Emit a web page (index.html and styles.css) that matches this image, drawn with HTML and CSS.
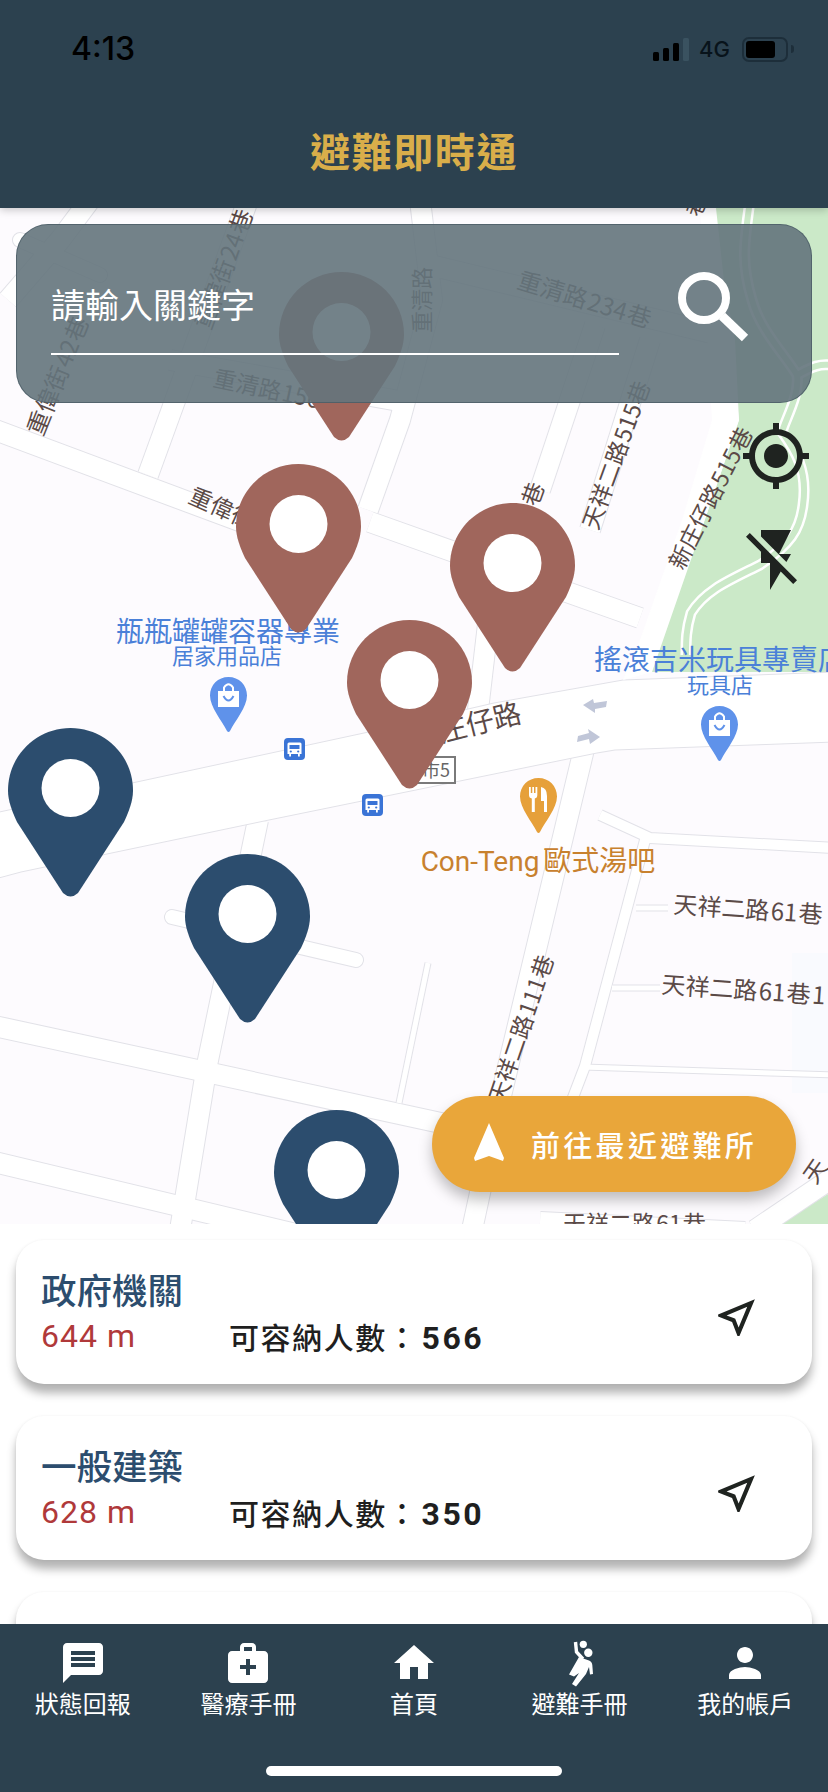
FILE: index.html
```html
<!DOCTYPE html>
<html lang="zh-Hant">
<head>
<meta charset="utf-8">
<title>避難即時通</title>
<link rel="stylesheet" href="styles.css">
</head>
<body>
<div class="app">
  <header class="topbar">
    <div class="status">
      <span class="time">4:13</span>
      <div class="status-right">
        <div class="signal"><i class="b1"></i><i class="b2"></i><i class="b3"></i><i class="b4"></i></div>
        <span class="net">4G</span>
        <div class="battery"><i class="level"></i></div>
        <i class="nub"></i>
      </div>
    </div>
    <h1 class="title">避難即時通</h1>
  </header>

  <main class="map">
    <svg class="basemap" viewBox="0 208 828 1016" width="828" height="1016" aria-hidden="true">
      <rect class="m-tint" x="792" y="953" width="36" height="140"/>
      <polygon class="m-green" points="715,208 828,208 828,672 644,672 652,650 681,567 703,525 739,420 735,340 720,260"/>
      <polygon class="m-green" points="780,1224 828,1194 828,1224"/>

      <g class="m-edge">
        <polyline points="-10,428 250,525"/>
        <polyline points="370,522 640,618"/>
        <polyline points="248,200 148,475"/>
        <polyline points="420,200 432,300 400,420 368,510"/>
        <polyline points="430,265 720,335"/>
        <polyline points="170,360 410,403"/>
        <polyline points="595,325 540,490"/>
        <polyline points="650,340 590,530"/>
        <polyline points="492,590 478,710"/>
        <polyline points="585,745 500,1100 472,1230"/>
        <polyline points="258,820 207,1065 180,1230"/>
        <polyline points="-10,1025 450,1125"/>
        <polyline points="-10,1161 300,1235"/>
        <polyline points="755,1230 835,1176"/>
        <polyline points="540,1222 745,1232"/>
        <polyline class="w-sm" points="172,917 356,960"/>
        <polyline class="w-xs" points="428,963 399,1103"/>
        <polyline class="w-t" points="645,840 585,1066 572,1100"/>
        <polyline class="w-t" points="600,815 650,838 835,848"/>
        <polyline class="w-xs" points="636,908 668,908"/>
        <polyline class="w-xs" points="612,988 660,988"/>
        <polyline class="w-xs" points="583,1067 835,1075"/>
        <polyline points="90,200 60,240 8,300"/>
        <polyline class="w-sm" points="20,240 100,275"/>
      </g>
      <g class="m-road">
        <polyline points="-10,428 250,525"/>
        <polyline points="370,522 640,618"/>
        <polyline points="248,200 148,475"/>
        <polyline points="420,200 432,300 400,420 368,510"/>
        <polyline points="430,265 720,335"/>
        <polyline points="170,360 410,403"/>
        <polyline points="595,325 540,490"/>
        <polyline points="650,340 590,530"/>
        <polyline points="492,590 478,710"/>
        <polyline points="585,745 500,1100 472,1230"/>
        <polyline points="258,820 207,1065 180,1230"/>
        <polyline points="-10,1025 450,1125"/>
        <polyline points="-10,1161 300,1235"/>
        <polyline points="755,1230 835,1176"/>
        <polyline points="540,1222 745,1232"/>
        <polyline class="w-sm" points="172,917 356,960"/>
        <polyline class="w-xs" points="428,963 399,1103"/>
        <polyline class="w-t" points="645,840 585,1066 572,1100"/>
        <polyline class="w-t" points="600,815 650,838 835,848"/>
        <polyline class="w-xs" points="636,908 668,908"/>
        <polyline class="w-xs" points="612,988 660,988"/>
        <polyline class="w-xs" points="583,1067 835,1075"/>
        <polyline points="90,200 60,240 8,300"/>
        <polyline class="w-sm" points="20,240 100,275"/>
      </g>

      <polygon class="m-main" points="-5,813 132,783 364,733 494,703 623,680 835,672 835,742 615,750 597,753 269,820 21,872 -5,879"/>
      <polygon class="m-white" points="700,208 716,208 739,420 703,525 652,672 623,680 640,640 682,520 712,420"/>

      <path class="m-path-a" d="M750 200 C745 240 740 260 752 300 C760 330 785 355 797 375 C800 395 785 420 782 432 C795 450 808 470 803 505 C800 530 790 545 760 565 C730 580 705 590 691 613 C686 630 686 640 686 655 M797 375 C810 368 820 362 835 366"/>
      <path class="m-path-b" d="M750 200 C745 240 740 260 752 300 C760 330 785 355 797 375 C800 395 785 420 782 432 C795 450 808 470 803 505 C800 530 790 545 760 565 C730 580 705 590 691 613 C686 630 686 640 686 655 M797 375 C810 368 820 362 835 366"/>

      <path class="m-arrow" d="M583 705 L593 699 L594 703 L607 701 L606 707 L595 709 L595 713 Z"/>
      <path class="m-arrow" d="M600 737 L590 744 L589 739 L577 742 L578 736 L589 733 L588 729 Z"/>

      <g class="lbl">
        <text transform="translate(66 379) rotate(-68)">重偉街 42 巷</text>
        <text transform="translate(232 272) rotate(-70)">重偉街 24 巷</text>
        <text class="fs22" transform="translate(430 300) rotate(-90)">重清路</text>
        <text class="fs24" transform="translate(582 308) rotate(17)">重清路 234 巷</text>
        <text class="fs23 st" transform="translate(212 386) rotate(12)">重清路 156 巷</text>
        <text class="fs23 st" transform="translate(187 502) rotate(24)">重偉街</text>
        <text class="fs23" transform="translate(541 497) rotate(-70)">巷</text>
        <text class="fs23" transform="translate(624 458) rotate(-70)">天祥二路 515 巷</text>
        <text class="fs23" transform="translate(718 502) rotate(-63)">新庄仔路 515 巷</text>
        <text class="fs28 en" transform="translate(523 722) rotate(-14)">新庄仔路</text>
        <text class="fs23" transform="translate(529 1032) rotate(-71)">天祥二路 111 巷</text>
        <text class="st" transform="translate(673 913) rotate(4)">天祥二路 61 巷</text>
        <text class="st" transform="translate(661 993) rotate(4)">天祥二路 61 巷 1</text>
        <text class="st fs23" transform="translate(563 1232)">天祥二路 61 巷</text>
        <text class="fs23" transform="translate(822 1176) rotate(-55)">天</text>
        <text class="fs22" transform="translate(704 208) rotate(-70)">巷</text>
      </g>
      <text class="poi-blue big" x="228" y="642">瓶瓶罐罐容器專業</text>
      <text class="poi-blue small" x="227" y="664">居家用品店</text>
      <text class="poi-blue big st" x="594" y="670">搖滾吉米玩具專賣店</text>
      <text class="poi-blue small" x="720" y="693">玩具店</text>
      <text class="poi-orange" x="538" y="871">Con-Teng 歐式湯吧</text>

      <g class="m-sign">
        <rect x="417" y="757" width="38" height="26"/>
        <text x="436" y="777">市5</text>
      </g>

      <g transform="translate(210 677)">
        <path class="shop" d="M18.5 0C29 0 37 8 37 18.500C37 30 25 44 20 54Q18.500 56 17 54C12 44 0 30 0 18.500C0 8 8 0 18.500 0Z"/>
        <path class="m-white" d="M8 14H29V30H8Z"/>
        <path class="bag" d="M14 14V10.500Q18.500 4 23 10.500V14" />
        <path class="bag-b" d="M13.500 19Q18.500 28 23.500 19"/>
      </g>
      <g transform="translate(701 706)">
        <path class="shop" d="M18.5 0C29 0 37 8 37 18.500C37 30 25 44 20 54Q18.500 56 17 54C12 44 0 30 0 18.500C0 8 8 0 18.500 0Z"/>
        <path class="m-white" d="M8 14H29V30H8Z"/>
        <path class="bag" d="M14 14V10.500Q18.500 4 23 10.500V14" />
        <path class="bag-b" d="M13.500 19Q18.500 28 23.500 19"/>
      </g>
      <g transform="translate(520 778)">
        <path class="food" d="M18.5 0C29 0 37 8 37 18.500C37 30 25 44 20 54Q18.500 56 17 54C12 44 0 30 0 18.500C0 8 8 0 18.500 0Z"/>
        <path class="m-white" d="M9 9H10.800V15H12.300V9H14V15H15.500V9H17.300V17Q17.300 20 14.800 20.500V34H11.800V20.500Q9 20 9 17Z"/>
        <path class="m-white" d="M21 9Q27 10 27 18V34H24V23H21Z"/>
      </g>
      <g transform="translate(284 738)">
        <rect class="bus" width="21" height="22" rx="4"/>
        <path class="m-white" d="M5 4.500H16Q17.500 4.500 17.500 6V16H15.800V18.500H14V16H7V18.500H5.200V16H3.500V6Q3.500 4.500 5 4.500Z"/>
        <path class="bus" d="M5.500 7H15.500V11H5.500Z"/>
        <circle class="bus" cx="6.800" cy="13.500" r="1.100"/>
        <circle class="bus" cx="14.200" cy="13.500" r="1.100"/>
      </g>
      <g transform="translate(362 794)">
        <rect class="bus" width="21" height="22" rx="4"/>
        <path class="m-white" d="M5 4.500H16Q17.500 4.500 17.500 6V16H15.800V18.500H14V16H7V18.500H5.200V16H3.500V6Q3.500 4.500 5 4.500Z"/>
        <path class="bus" d="M5.500 7H15.500V11H5.500Z"/>
        <circle class="bus" cx="6.800" cy="13.500" r="1.100"/>
        <circle class="bus" cx="14.200" cy="13.500" r="1.100"/>
      </g>
    </svg>

    <svg class="pin brown p1" viewBox="0 0 125 170"><path d="M62.500 0C97 0 125 28 125 62.500C125 73 121 83 116 94L70 165Q62.500 172 55 165L9 94C4 83 0 73 0 62.500C0 28 28 0 62.500 0Z"/><circle cx="62.500" cy="60" r="29"/></svg>
    <svg class="pin brown p2" viewBox="0 0 125 170"><path d="M62.500 0C97 0 125 28 125 62.500C125 73 121 83 116 94L70 165Q62.500 172 55 165L9 94C4 83 0 73 0 62.500C0 28 28 0 62.500 0Z"/><circle cx="62.500" cy="60" r="29"/></svg>
    <svg class="pin brown p3" viewBox="0 0 125 170"><path d="M62.500 0C97 0 125 28 125 62.500C125 73 121 83 116 94L70 165Q62.500 172 55 165L9 94C4 83 0 73 0 62.500C0 28 28 0 62.500 0Z"/><circle cx="62.500" cy="60" r="29"/></svg>
    <svg class="pin brown p4" viewBox="0 0 125 170"><path d="M62.500 0C97 0 125 28 125 62.500C125 73 121 83 116 94L70 165Q62.500 172 55 165L9 94C4 83 0 73 0 62.500C0 28 28 0 62.500 0Z"/><circle cx="62.500" cy="60" r="29"/></svg>
    <svg class="pin navy p5" viewBox="0 0 125 170"><path d="M62.500 0C97 0 125 28 125 62.500C125 73 121 83 116 94L70 165Q62.500 172 55 165L9 94C4 83 0 73 0 62.500C0 28 28 0 62.500 0Z"/><circle cx="62.500" cy="60" r="29"/></svg>
    <svg class="pin navy p6" viewBox="0 0 125 170"><path d="M62.500 0C97 0 125 28 125 62.500C125 73 121 83 116 94L70 165Q62.500 172 55 165L9 94C4 83 0 73 0 62.500C0 28 28 0 62.500 0Z"/><circle cx="62.500" cy="60" r="29"/></svg>
    <svg class="pin navy p7" viewBox="0 0 125 170"><path d="M62.500 0C97 0 125 28 125 62.500C125 73 121 83 116 94L70 165Q62.500 172 55 165L9 94C4 83 0 73 0 62.500C0 28 28 0 62.500 0Z"/><circle cx="62.500" cy="60" r="29"/></svg>

    <div class="search">
      <div class="field"><span class="placeholder">請輸入關鍵字</span></div>
      <svg class="search-icon" viewBox="0 0 72 72"><circle cx="27" cy="27" r="22"/><line x1="45" y1="45" x2="68" y2="67"/></svg>
    </div>

    <div class="map-tools">
      <svg class="tool" viewBox="0 0 24 24"><path d="M12 8c-2.210 0-4 1.790-4 4s1.790 4 4 4 4-1.790 4-4-1.790-4-4-4zm8.940 3c-.46-4.170-3.770-7.480-7.940-7.940V1h-2v2.060C6.830 3.520 3.520 6.830 3.060 11H1v2h2.060c.46 4.170 3.770 7.480 7.940 7.940V23h2v-2.060c4.170-.46 7.480-3.770 7.940-7.940H23v-2h-2.060zM12 19c-3.870 0-7-3.130-7-7s3.130-7 7-7 7 3.130 7 7-3.130 7-7 7z"/></svg>
      <svg class="tool" viewBox="0 0 24 24"><path d="M3.270 3L2 4.270l5 5V13h3v9l3.580-6.140L17.730 20 19 18.730 3.270 3zM17 10h-4l4-8H7v2.180l8.460 8.460L17 10z"/></svg>
    </div>

    <button class="fab">
      <svg class="fab-icon" viewBox="0 0 30 38"><path d="M15 0L30 35L29 38L15 33L1 38L0 35Z"/></svg>
      <span>前往最近避難所</span>
    </button>
  </main>

  <section class="list">
    <article class="card">
      <div class="card-body">
        <h2 class="card-title">政府機關</h2>
        <div class="card-row"><span class="dist">644 m</span><span class="cap">可容納人數：<b>566</b></span></div>
      </div>
      <svg class="go" viewBox="0 0 24 24"><path d="M17.270 6.730l-4.240 10.130-1.320-3.420-.32-.83-.82-.32-3.430-1.330 10.130-4.230M21 3L3 10.530v.98l6.840 2.650L12.480 21h.98L21 3z"/></svg>
    </article>
    <article class="card">
      <div class="card-body">
        <h2 class="card-title">一般建築</h2>
        <div class="card-row"><span class="dist">628 m</span><span class="cap">可容納人數：<b>350</b></span></div>
      </div>
      <svg class="go" viewBox="0 0 24 24"><path d="M17.270 6.730l-4.240 10.130-1.320-3.420-.32-.83-.82-.32-3.430-1.330 10.130-4.230M21 3L3 10.530v.98l6.840 2.650L12.480 21h.98L21 3z"/></svg>
    </article>
    <article class="card"></article>
  </section>

  <nav class="tabbar">
    <div class="tabs">
      <a class="tab"><svg viewBox="0 0 24 24"><path d="M20 2H4c-1.100 0-1.990.9-1.990 2L2 22l4-4h14c1.100 0 2-.9 2-2V4c0-1.100-.9-2-2-2zm-2 12H6v-2h12v2zm0-3H6V9h12v2zm0-3H6V6h12v2z"/></svg><span>狀態回報</span></a>
      <a class="tab"><svg viewBox="0 0 24 24"><path d="M20 6h-4V4c0-1.100-.9-2-2-2h-4c-1.100 0-2 .9-2 2v2H4c-1.100 0-2 .9-2 2v12c0 1.100.9 2 2 2h16c1.100 0 2-.9 2-2V8c0-1.100-.9-2-2-2zM10 4h4v2h-4V4zm6 11h-3v3h-2v-3H8v-2h3v-3h2v3h3v2z"/></svg><span>醫療手冊</span></a>
      <a class="tab"><svg viewBox="0 0 24 24"><path d="M10 20v-6h4v6h5v-8h3L12 3 2 12h3v8z"/></svg><span>首頁</span></a>
      <a class="tab"><svg viewBox="0 0 48 48"><circle cx="27.300" cy="5.300" r="3.600"/><circle cx="32.300" cy="13.700" r="4.200"/><path class="arm" d="M19.500 3L20.500 13L27 20"/><path d="M23 18L33 21.500Q36 22.500 36.300 26L37 35L34 35.500L33 28L30 35L20 47.500L16 45L23 34L18 37.500L13 35.500Z"/></svg><span>避難手冊</span></a>
      <a class="tab"><svg viewBox="0 0 24 24"><path d="M12 12c2.210 0 4-1.790 4-4s-1.790-4-4-4-4 1.790-4 4 1.790 4 4 4zm0 2c-2.670 0-8 1.340-8 4v2h16v-2c0-2.660-5.330-4-8-4z"/></svg><span>我的帳戶</span></a>
    </div>
    <div class="home-bar"></div>
  </nav>
</div>
</body>
</html>
```

FILE: styles.css
```css
* { box-sizing: border-box; }
html, body { margin: 0; padding: 0; }
body {
  width: 828px;
  height: 1792px;
  overflow: hidden;
  background: #fff;
  font-family: Roboto, "Noto Sans CJK TC", sans-serif;
}
.app {
  display: flex;
  flex-direction: column;
  width: 828px;
  height: 1792px;
  overflow: hidden;
}

/* header */
.topbar {
  flex: 0 0 208px;
  background: #2c414f;
  position: relative;
  z-index: 3;
  box-shadow: 0 2px 8px rgba(0, 0, 0, .22);
  display: flex;
  flex-direction: column;
}
.status {
  height: 76px;
  padding: 22px 34px 0 71px;
  display: flex;
  justify-content: space-between;
  align-items: center;
}
.time {
  font-family: Inter, Roboto, sans-serif;
  font-size: 32px;
  font-weight: 500;
  color: #000;
  line-height: 36px;
}
.status-right { display: flex; align-items: center; }
.signal { display: flex; align-items: flex-end; gap: 4px; height: 23px; margin-right: 10px; }
.signal i { display: block; width: 6px; background: #000; border-radius: 1.500px; }
.signal .b1 { height: 9px; }
.signal .b2 { height: 13px; }
.signal .b3 { height: 18px; }
.signal .b4 { height: 23px; background: #3a5260; }
.net {
  font-family: Inter, Roboto, sans-serif;
  font-size: 22px;
  font-weight: 500;
  color: #08131b;
  line-height: 26px;
  margin-right: 12px;
}
.battery {
  width: 46px;
  height: 25px;
  border: 2px solid #1d2e3a;
  border-radius: 7px;
  padding: 2px;
}
.battery .level { display: block; width: 29px; height: 17px; background: #000; border-radius: 3px; }
.nub { display: block; width: 3px; height: 8px; margin-left: 3px; background: #1d2e3a; border-radius: 0 3px 3px 0; }
.title {
  margin: 44px 0 0;
  text-align: center;
  color: #d9ae4a;
  font-family: "Noto Sans CJK TC", sans-serif;
  font-size: 40px;
  font-weight: 700;
  letter-spacing: 1.600px;
  line-height: 60px;
}

/* map */
.map {
  flex: 0 0 1016px;
  position: relative;
  overflow: hidden;
  background: #fdfbfe;
}
.basemap { position: absolute; left: 0; top: 0; display: block; }
.m-tint { fill: #f9fafe; }
.m-green { fill: #cbe9c8; }
.m-white { fill: #fff; }
.m-edge polyline, .m-road polyline { fill: none; stroke-linejoin: round; }
.m-edge polyline { stroke: #e2e2e8; stroke-width: 22px; }
.m-road polyline { stroke: #fff; stroke-width: 20px; }
.m-edge .w-sm { stroke-width: 16px; stroke-linecap: round; }
.m-road .w-sm { stroke-width: 14px; stroke-linecap: round; }
.m-edge .w-t { stroke-width: 12px; }
.m-road .w-t { stroke-width: 10px; }
.m-edge .w-xs { stroke-width: 7px; }
.m-road .w-xs { stroke-width: 5px; }
.m-main { fill: #fff; stroke: #e2e2e8; stroke-width: 1px; }
.m-path-a { fill: none; stroke: #fff; stroke-width: 11px; }
.m-path-b { fill: none; stroke: #cbe9c8; stroke-width: 6px; }
.m-arrow { fill: #c0c6d8; }
.lbl text {
  font-family: "Noto Sans CJK TC", sans-serif;
  font-size: 24px;
  word-spacing: -4px;
  fill: #5b4a47;
  text-anchor: middle;
}
.lbl .fs22 { font-size: 22px; }
.lbl .fs23 { font-size: 23px; }
.lbl .fs24 { font-size: 24px; }
.lbl .fs28 { font-size: 28px; }
.lbl .en { text-anchor: end; }
.lbl .st { text-anchor: start; }
.poi-blue {
  font-family: "Noto Sans CJK TC", sans-serif;
  fill: #4a80d8;
  text-anchor: middle;
}
.poi-blue.big { font-size: 28px; }
.poi-blue.small { font-size: 22px; }
.poi-blue.st { text-anchor: start; }
.poi-orange {
  font-family: Roboto, "Noto Sans CJK TC", sans-serif;
  font-size: 28px;
  word-spacing: -3px;
  fill: #c8812e;
  text-anchor: middle;
}
.m-sign rect { fill: #fff; stroke: #7a7a7a; stroke-width: 2px; }
.m-sign text {
  font-family: "Noto Sans CJK TC", sans-serif;
  font-size: 18px;
  fill: #666;
  text-anchor: middle;
}
.shop { fill: #5f92ea; }
.food { fill: #e6a03a; }
.bus { fill: #3a74d6; }
.bag { fill: none; stroke: #fff; stroke-width: 2px; }
.bag-b { fill: none; stroke: #5f92ea; stroke-width: 2px; }

.pin { position: absolute; width: 125px; height: 170px; }
.pin circle { fill: #fff; }
.brown path { fill: #a0665c; }
.navy path { fill: #2c4d6e; }
.p1 { left: 279px; top: 64px; }
.p2 { left: 236px; top: 256px; }
.p3 { left: 450px; top: 295px; }
.p4 { left: 347px; top: 412px; }
.p5 { left: 8px; top: 520px; }
.p6 { left: 185px; top: 646px; }
.p7 { left: 274px; top: 902px; }

.search {
  position: absolute;
  left: 16px;
  top: 16px;
  width: 796px;
  height: 179px;
  display: flex;
  align-items: flex-start;
  padding: 0 61px 0 34px;
  background: rgba(100, 116, 124, .9);
  border: 1px solid rgba(70, 88, 98, .7);
  border-radius: 32px;
}
.field {
  width: 568px;
  height: 130px;
  border-bottom: 2px solid #fff;
  display: flex;
  align-items: flex-end;
  padding-bottom: 24px;
}
.placeholder {
  font-family: "Noto Sans CJK TC", sans-serif;
  font-size: 34px;
  line-height: 50px;
  color: #fff;
}
.search-icon { width: 72px; height: 72px; margin: 46px 0 0 58px; }
.search-icon circle { fill: none; stroke: #fff; stroke-width: 8px; }
.search-icon line { stroke: #fff; stroke-width: 9px; }

.map-tools {
  position: absolute;
  left: 740px;
  top: 212px;
  display: flex;
  flex-direction: column;
  gap: 32px;
}
.tool { display: block; width: 72px; height: 72px; fill: #1f2320; }

.fab {
  position: absolute;
  left: 432px;
  top: 888px;
  width: 364px;
  height: 96px;
  border: 0;
  border-radius: 48px;
  background: #e9a63a;
  box-shadow: 0 8px 14px rgba(0, 0, 0, .25);
  display: flex;
  align-items: center;
  gap: 27px;
  padding: 0 0 0 42px;
  color: #fff;
  font-family: "Noto Sans CJK TC", sans-serif;
  font-size: 29px;
  font-weight: 500;
  letter-spacing: 3.300px;
}
.fab-icon { width: 30px; height: 38px; fill: #fff; flex: none; margin-top: -4px; }

/* list */
.list {
  flex: 1 1 0;
  min-height: 0;
  overflow: hidden;
  padding: 16px 16px 0;
  display: flex;
  flex-direction: column;
  gap: 32px;
}
.card {
  flex: 0 0 144px;
  background: #fff;
  border-radius: 28px;
  box-shadow: 0 9px 10px rgba(0, 0, 0, .3), 0 0 3px rgba(0, 0, 0, .05);
  display: flex;
  align-items: flex-start;
  justify-content: space-between;
  padding: 27px 51px 0 25px;
}
.card-title {
  margin: 0;
  font-family: "Noto Sans CJK TC", sans-serif;
  font-size: 35.500px;
  line-height: 44px;
  font-weight: 500;
  color: #2c4d6e;
}
.card-row { display: flex; align-items: center; gap: 93px; margin-top: 5px; height: 40px; }
.dist { font-size: 32px; letter-spacing: 1px; color: #b0393a; }
.cap { font-size: 30px; letter-spacing: 1.600px; color: #1f1f1f; font-weight: 500; }
.cap b { font-size: 32px; font-weight: 700; letter-spacing: 2.500px; margin-left: 3px; }
.go { width: 49px; height: 49px; margin-top: 26px; fill: #1f2320; flex: none; }

/* tabs */
.tabbar {
  flex: 0 0 168px;
  background: #2c414f;
  display: flex;
  flex-direction: column;
  position: relative;
  z-index: 2;
}
.tabs { display: grid; grid-template-columns: repeat(5, 1fr); padding-top: 15px; }
.tab { display: flex; flex-direction: column; align-items: center; color: #fff; }
.tab svg { width: 48px; height: 48px; fill: #fff; display: block; }
.tab .arm { fill: none; stroke: #fff; stroke-width: 3.400px; }
.tab span {
  font-family: "Noto Sans CJK TC", sans-serif;
  font-size: 24px;
  line-height: 34px;
  margin-top: -1px;
}
.home-bar {
  width: 296px;
  height: 10px;
  border-radius: 5px;
  background: #fff;
  margin: 46px 0 0 266px;
}
```
